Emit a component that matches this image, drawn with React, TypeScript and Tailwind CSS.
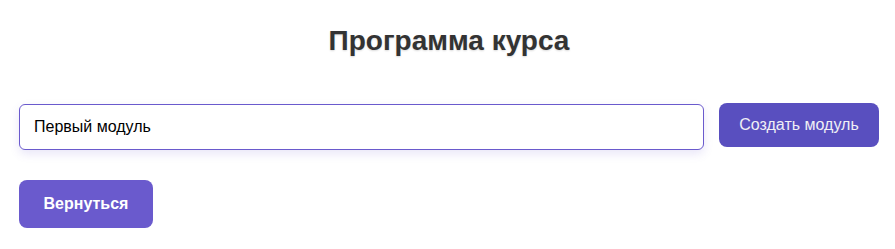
export default function App() {
  return (
    <div className="min-h-[249px] bg-white pl-[19px] pr-[16px] font-['Liberation_Sans',Arial,sans-serif]">
      {/* Title */}
      <h1 className="pt-[24px] text-center text-[28px] font-bold leading-[34px] text-[#333] [text-shadow:0_1px_2px_rgba(0,0,0,0.15)]">
        Программа курса
      </h1>

      {/* Module form */}
      <div className="mt-[45px] flex items-start gap-[15px]">
        <input
          type="text"
          defaultValue="Первый модуль"
          className="mt-[1px] h-[46px] flex-1 rounded-[6px] border border-[#6a5acd] bg-white px-[14px] text-[16px] text-black shadow-[0_4px_10px_rgba(106,90,205,0.15)] outline-none"
        />
        <button className="h-[44px] w-[160px] shrink-0 rounded-[8px] bg-[#594fbf] text-[16px] text-[#f0f0f5]">
          Создать модуль
        </button>
      </div>

      {/* Back */}
      <button className="mt-[30px] h-[48px] w-[134px] rounded-[8px] bg-[#6a5acd] text-[16px] font-bold text-white">
        Вернуться
      </button>
    </div>
  )
}
